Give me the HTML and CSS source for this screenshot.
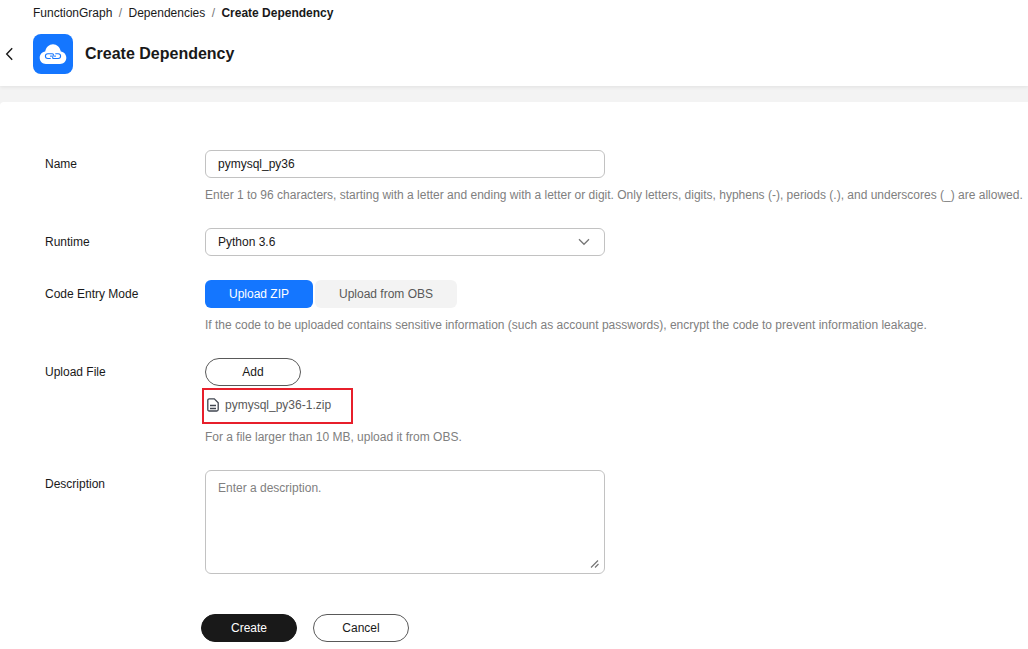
FILE: index.html
```html
<!DOCTYPE html>
<html lang="en">
<head>
    <meta charset="UTF-8">
    <meta name="viewport" content="width=device-width, initial-scale=1.0">
    <title>Create Dependency</title>
    <link rel="stylesheet" href="styles.css">
</head>
<body>
    <header class="page-header">
        <nav class="breadcrumb">
            <a href="#">FunctionGraph</a>
            <span class="sep">/</span>
            <a href="#">Dependencies</a>
            <span class="sep">/</span>
            <strong>Create Dependency</strong>
        </nav>
        <div class="title-row">
            <a class="back" href="#" aria-label="Back">
                <svg width="10" height="14" viewBox="0 0 10 14"><path d="M8.200 1.300L2.700 7l5.500 5.700" fill="none" stroke="#191919" stroke-width="1.400"/></svg>
            </a>
            <div class="service-icon">
                <svg width="40" height="40" viewBox="0 0 40 40">
                    <path d="M13 30c-3.600 0-6.300-2.800-6.300-6.200 0-3.200 2.300-5.700 5.500-6.200C13 13.300 16.200 10.300 20 10.300s7 3 7.800 7.300c3.200.5 5.500 3 5.500 6.200 0 3.400-2.700 6.200-6.300 6.200z" fill="#fff"/>
                    <path d="M17.700 24.500h-2.900a2.400 2.400 0 0 1 0-4.800h4.400q1.600 0 1.100 1.300l-.6 2.200q-.5 1.300 1.100 1.300h4.400a2.400 2.400 0 0 0 0-4.800h-2.900M17.200 22.100h1.600M21.200 22.100h1.600" fill="none" stroke="#1476ff" stroke-width="1.100"/>
                </svg>
            </div>
            <h1>Create Dependency</h1>
        </div>
    </header>

    <main class="panel">
        <form class="form">
            <div class="row row-name">
                <label for="name">Name</label>
                <div class="control">
                    <input class="field" id="name" type="text" value="pymysql_py36" spellcheck="false">
                    <p class="help">Enter 1 to 96 characters, starting with a letter and ending with a letter or digit. Only letters, digits, hyphens (-), periods (.), and underscores (_) are allowed.</p>
                </div>
            </div>
            <div class="row row-runtime">
                <label>Runtime</label>
                <div class="control">
                    <div class="field select">
                        <span>Python 3.6</span>
                        <svg width="12" height="8" viewBox="0 0 12 8"><path d="M1 1.300l5 5 5-5" fill="none" stroke="#777" stroke-width="1.300"/></svg>
                    </div>
                </div>
            </div>
            <div class="row row-mode">
                <label>Code Entry Mode</label>
                <div class="control">
                    <div class="tabs">
                        <button class="tab tab-zip active" type="button">Upload ZIP</button>
                        <button class="tab tab-obs" type="button">Upload from OBS</button>
                    </div>
                    <p class="help">If the code to be uploaded contains sensitive information (such as account passwords), encrypt the code to prevent information leakage.</p>
                </div>
            </div>
            <div class="row row-file">
                <label>Upload File</label>
                <div class="control">
                    <button class="btn" type="button">Add</button>
                    <div class="file-box">
                        <svg width="12" height="14" viewBox="0 0 12 14"><path d="M2.300.9h5l3.900 3.900v6.700q0 1.500-1.500 1.500H2.300Q.8 13 .8 11.500v-9.100Q.8.900 2.300.9zM3 7.500h6M3 10.500h6" fill="none" stroke="#404650" stroke-width="1.300"/></svg>
                        <span>pymysql_py36-1.zip</span>
                    </div>
                    <p class="help help-file">For a file larger than 10 MB, upload it from OBS.</p>
                </div>
            </div>
            <div class="row">
                <label for="description">Description</label>
                <div class="control">
                    <div class="textarea-wrap">
                        <textarea class="field" id="description" placeholder="Enter a description."></textarea>
                        <svg class="grip" width="10" height="10" viewBox="0 0 10 10"><path d="M1 8.500l7-7M5 8.500l3.500-3.500" fill="none" stroke="#777" stroke-width="1.200"/></svg>
                    </div>
                </div>
            </div>
            <div class="actions">
                <button class="btn btn-primary" type="button">Create</button>
                <button class="btn" type="button">Cancel</button>
            </div>
        </form>
    </main>
</body>
</html>
```

FILE: styles.css
```css
* {
    box-sizing: border-box;
}
body {
    margin: 0;
    height: 649px;
    overflow: hidden;
    display: flex;
    flex-direction: column;
    background: #f3f3f3;
    color: #191919;
    font-family: "Liberation Sans", Arial, sans-serif;
    font-size: 12px;
    line-height: 18px;
}
a {
    color: inherit;
    text-decoration: none;
}
svg {
    display: block;
    flex: none;
}
.page-header {
    height: 86px;
    flex: none;
    padding-top: 4px;
    background: #fff;
    box-shadow: 0 1px 4px rgba(0, 0, 0, 0.08);
}
.breadcrumb {
    display: flex;
    gap: 6.4px;
    padding-left: 33px;
    white-space: nowrap;
}
.sep {
    color: #777;
}
.title-row {
    display: flex;
    align-items: center;
    margin-top: 12px;
}
.back {
    width: 33px;
    padding-left: 4px;
}
.service-icon {
    width: 40px;
    height: 40px;
    border-radius: 8px;
    background: #1476ff;
}
h1 {
    margin: 0 0 0 12px;
    font-size: 16px;
    line-height: 24px;
}
.panel {
    flex: 1;
    margin-top: 16px;
    padding: 48px 0 0 45px;
    border-radius: 4px 0 0 0;
    background: #fff;
}
.row {
    display: flex;
}
.row-name {
    height: 78px;
}
.row-runtime {
    height: 52px;
}
.row-mode {
    height: 78px;
}
.row-file {
    height: 112px;
}
label {
    width: 160px;
    flex: none;
    line-height: 28px;
}
.field {
    display: block;
    width: 400px;
    height: 28px;
    padding: 0 12px;
    border: 1px solid #c2c2c2;
    border-radius: 6px;
    outline: none;
    background: #fff;
    color: #191919;
    font: inherit;
}
.select {
    display: flex;
    align-items: center;
    justify-content: space-between;
    padding-right: 14px;
}
.help {
    margin: 8px 0 0;
    color: #808080;
    white-space: nowrap;
}
.tabs {
    display: flex;
    gap: 2px;
}
.tab {
    height: 28px;
    padding: 0;
    border: 0;
    border-radius: 6px;
    background: #f3f3f3;
    color: #595959;
    font: inherit;
}
.tab-zip {
    width: 108px;
}
.tab-obs {
    width: 142px;
}
.tab.active {
    background: #1476ff;
    color: #fff;
}
.btn {
    display: block;
    width: 96px;
    height: 28px;
    padding: 0;
    border: 1px solid #595959;
    border-radius: 14px;
    background: #fff;
    color: #191919;
    font: inherit;
}
.file-box {
    display: flex;
    align-items: center;
    gap: 6px;
    width: 151px;
    height: 36px;
    margin: 2px 0 0 -3px;
    padding: 0 0 2px 3px;
    border: 2px solid #e71f2b;
    color: #595959;
}
.help-file {
    margin-top: 4px;
}
.textarea-wrap {
    position: relative;
    width: 400px;
}
textarea.field {
    height: 104px;
    padding: 8px 12px;
    resize: none;
}
textarea::placeholder {
    color: #808080;
}
.grip {
    position: absolute;
    right: 5px;
    bottom: 5px;
}
.actions {
    display: flex;
    gap: 16px;
    margin: 40px 0 0 156px;
}
.btn-primary {
    border-color: #191919;
    background: #191919;
    color: #fff;
}
```
